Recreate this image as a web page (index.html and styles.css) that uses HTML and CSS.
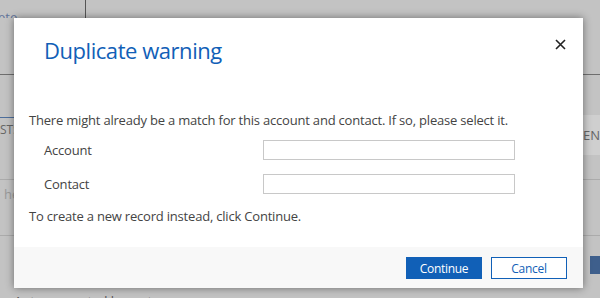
FILE: index.html
```html
<!DOCTYPE html>
<html lang="en">
<head>
  <meta charset="UTF-8" />
  <title>Duplicate warning</title>
  <link rel="stylesheet" href="styles.css">
</head>
<body>
  <div class="page">
    <div class="toolbar">
      <div class="toolbar-cell"><span class="link">Delete</span></div>
    </div>
    <div class="header-band"></div>
    <div class="grid-head">
      <span class="col-left">STS</span>
      <span class="col-right">ENC</span>
    </div>
    <div class="grid-row"><span class="hint">he</span></div>
    <div class="grid-row last"><span class="blue-box"></span></div>
    <div class="footer-text">Autom. created by system</div>
  </div>

  <div class="modal">
    <div class="modal-head">
      <h1>Duplicate warning</h1>
      <button class="close" aria-label="Close">
        <svg width="11" height="11" viewBox="0 0 11 11"><path d="M1 1L10 10M10 1L1 10" stroke="#222" stroke-width="1.6"/></svg>
      </button>
    </div>
    <div class="modal-body">
      <p>There might already be a match for this account and contact. If so, please select it.</p>
      <div class="field first">
        <label>Account</label>
        <input type="text">
      </div>
      <div class="field">
        <label>Contact</label>
        <input type="text">
      </div>
      <p class="note">To create a new record instead, click Continue.</p>
    </div>
    <div class="modal-foot">
      <button class="btn primary">Continue</button>
      <button class="btn">Cancel</button>
    </div>
  </div>
</body>
</html>
```

FILE: styles.css
```css
* {
  box-sizing: border-box;
  margin: 0;
  padding: 0;
}
body {
  font-family: 'Open Sans', 'Noto Sans', sans-serif;
  background: #c3c3c3;
  color: #444;
  width: 600px;
  height: 298px;
  overflow: hidden;
  position: relative;
}
.page {
  font-size: 13px;
}
.toolbar {
  display: flex;
  height: 18px;
}
.toolbar-cell {
  width: 86px;
  height: 18px;
  border-right: 1px solid #555;
  overflow: hidden;
  white-space: nowrap;
  line-height: 18px;
  padding-top: 8px;
}
.link {
  color: #62739a;
  margin-left: -22px;
}
.header-band {
  height: 57px;
  border-bottom: 1px solid #6e6e6e;
}
.grid-head {
  height: 104px;
  display: flex;
  justify-content: space-between;
  align-items: flex-start;
  padding-top: 40px;
  position: relative;
}
.grid-head::before {
  content: '';
  position: absolute;
  left: 0;
  top: 42px;
  width: 20px;
  border-top: 1px solid #4d6e9c;
}
.col-left {
  margin-top: 6px;
  line-height: 18px;
  font-size: 12px;
  color: #666;
}
.col-right {
  width: 40px;
  height: 40px;
  background: #cfcfcf;
  line-height: 40px;
  padding-left: 23px;
  color: #666;
  white-space: nowrap;
  overflow: hidden;
}
.grid-row {
  height: 56px;
  border-top: 1px solid #ababab;
  position: relative;
}
.grid-row.last {
  height: 53px;
}
.hint {
  color: #9a9a9a;
  margin-left: 4px;
  line-height: 28px;
}
.blue-box {
  position: absolute;
  right: 0;
  top: 20px;
  width: 10px;
  height: 18px;
  background: #3e5f8c;
}
.footer-text {
  margin: 5px 0 0 14px;
  color: #555;
  line-height: 16px;
}
.modal {
  position: absolute;
  left: 14px;
  top: 18px;
  width: 569px;
  height: 270px;
  background: #fff;
  box-shadow: 0 0 8px rgba(0, 0, 0, 0.45);
  display: flex;
  flex-direction: column;
}
.modal-head {
  display: flex;
  justify-content: space-between;
  align-items: flex-start;
  height: 93px;
  padding: 17px 17px 0 30px;
}
.modal-head h1 {
  font-weight: 400;
  font-size: 22px;
  letter-spacing: -0.45px;
  color: #1160b7;
}
.close {
  border: none;
  background: none;
  margin-top: 3px;
  padding: 0;
}
.modal-body {
  flex: 1;
  padding: 0 15px;
  font-size: 13px;
  letter-spacing: -0.2px;
}
.modal-body p {
  line-height: 18px;
}
.field {
  display: flex;
  align-items: center;
  height: 34px;
  padding-left: 15px;
}
.field.first {
  margin-top: 4px;
}
.field label {
  width: 219px;
}
.field input {
  width: 252px;
  height: 20px;
  border: 1px solid #c8c8c8;
}
.modal-body .note {
  margin-top: 6px;
}
.modal-foot {
  height: 41px;
  background: #f8f8f8;
  display: flex;
  justify-content: flex-end;
  gap: 9px;
  padding: 10px 16px 0 0;
}
.btn {
  width: 76px;
  height: 22px;
  border: 1px solid #1160b7;
  background: #fff;
  color: #1160b7;
  font-family: inherit;
  font-size: 12px;
  letter-spacing: -0.3px;
}
.btn.primary {
  background: #1160b7;
  color: #fff;
}
```
